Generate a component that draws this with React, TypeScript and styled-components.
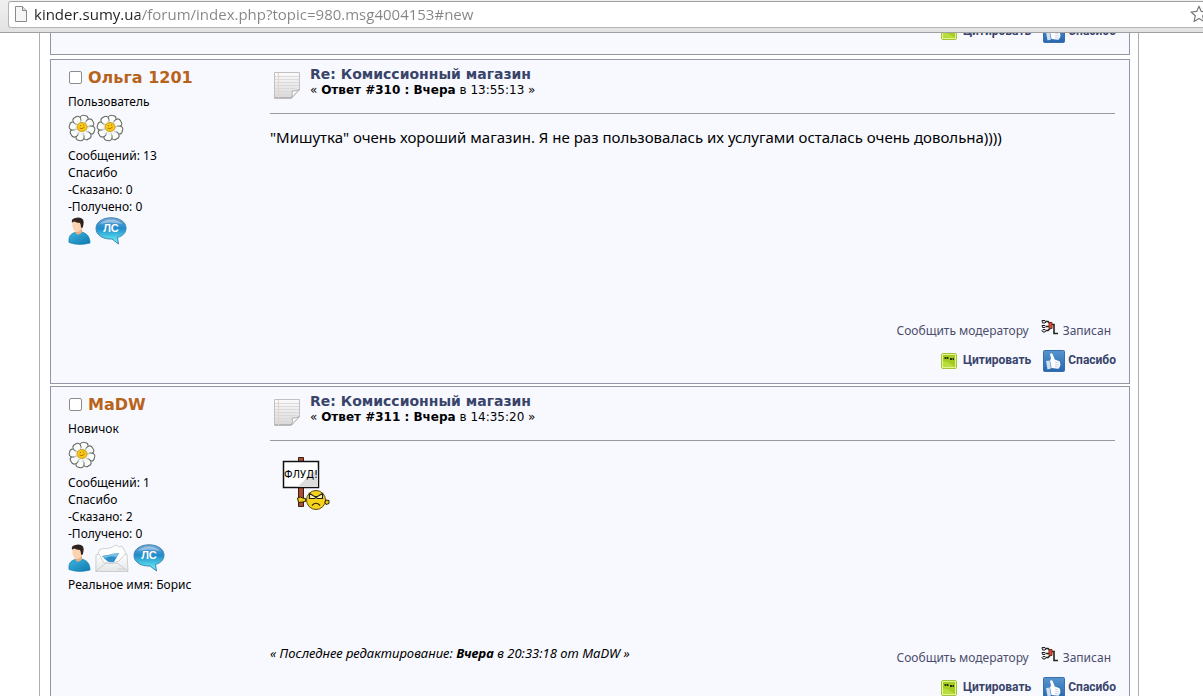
import React from "react";
import styled, { createGlobalStyle, css } from "styled-components";

const GlobalStyle = createGlobalStyle`
  *, *::before, *::after { box-sizing: border-box; }
  body {
    margin: 0;
    background: #fff;
    color: #000;
    font: 12px/17px "Noto Sans", Verdana, sans-serif;
  }
  h2, p { margin: 0; padding: 0; font-weight: normal; }
  svg { display: block; flex: none; }
  a { color: inherit; text-decoration: none; }
`;

const Browser = styled.div`
  display: flex;
  flex-direction: column;
  height: 100vh;
  overflow: hidden;
`;

const Toolbar = styled.header`
  display: flex;
  flex: none;
  height: 33px;
  padding: 1px 0 4px 8px;
  overflow: hidden;
  background: linear-gradient(#f0f0f0, #e2e2e2);
  border-bottom: 1px solid #a0a0a0;
`;

const AddressBox = styled.form`
  display: flex;
  flex: 1;
  align-items: center;
  gap: 7px;
  margin-right: -10px;
  padding: 0 4px 2px 6px;
  background: #fff;
  border: 1px solid #b4b4b4;
  border-top-color: #a2a2a2;
  border-radius: 3px;
`;

const AddressInput = styled.input`
  flex: 1;
  min-width: 0;
  padding: 0;
  border: 0;
  outline: 0;
  font: 15px/22px "Open Sans", "Segoe UI", sans-serif;
  color: transparent;
  background: linear-gradient(to right, #222 106px, #858585 106px);
  background-clip: text;
`;

const StarButton = styled.button`
  flex: none;
  padding: 0;
  border: 0;
  background: none;
`;

const Viewport = styled.main`
  flex: 1;
  min-height: 0;
  overflow: hidden;
`;

const Forum = styled.div`
  display: flex;
  flex-direction: column;
  gap: 2px;
  min-height: 100%;
  margin: 0 64px 0 39px;
  padding: 0 8px 0 10px;
  border: solid #b0b0b4;
  border-width: 0 1px;
`;

const panel = css`
  background: #f8f9ff;
  border: 1px solid #9495a5;
`;

const PreviousPost = styled.article`
  ${panel}
  display: flex;
  flex-direction: column;
  justify-content: flex-end;
  height: 22px;
  margin-bottom: 2px;
  padding: 0 13px 11px 17px;
  border-top: 0;
  overflow: hidden;
`;

const PostBox = styled.article`
  ${panel}
  display: grid;
  grid-template-columns: 202px 1fr;
  min-height: 325px;
  padding: 6px 13px 11px 17px;
`;

const Poster = styled.aside`
  display: flex;
  flex-direction: column;
`;

const NameRow = styled.label`
  display: flex;
  align-items: center;
  gap: 6px;
  height: 23px;
  margin-bottom: 4px;
  padding-left: 1px;
`;

const Tick = styled.input`
  width: 13px;
  height: 13px;
  margin: 0;
  appearance: none;
  background: #fff;
  border: 1px solid #8c8c8c;
  border-radius: 2px;
`;

const PosterName = styled.a`
  font: bold 16px/20px "DejaVu Sans", Verdana, sans-serif;
  color: #b8631c;
`;

const Stars = styled.div`
  display: flex;
  height: 28px;
  margin: 4px 0 5px;
`;

const Contacts = styled.div`
  display: flex;
  gap: 4px;
  height: 28px;
  margin: 2px 0 4px;
`;

const Content = styled.div`
  display: flex;
  flex-direction: column;
`;

const Heading = styled.header`
  display: flex;
  gap: 9px;
  height: 48px;
  margin-right: 1px;
  padding-left: 3px;
  border-bottom: 1px solid #9a9aa2;
`;

const Subject = styled.h2`
  font: bold 14px/16px "DejaVu Sans", Verdana, sans-serif;
  color: #38446a;
`;

const ReplyInfo = styled.p`
  font-family: "DejaVu Sans", Verdana, sans-serif;
`;

const NoteWrap = styled.div`
  padding-top: 4px;
`;

const Body = styled.div`
  flex: 1;
  padding-top: 13px;
  font-size: 15px;
  line-height: 20px;
`;

const Footer = styled.footer`
  display: flex;
  justify-content: space-between;
  height: 23px;
`;

const Edited = styled.p`
  font-size: 13px;
  font-style: italic;
  line-height: 15px;
`;

const Moderation = styled.div`
  display: flex;
  gap: 12px;
  margin-left: auto;
  padding-right: 5px;
  color: #4a4d6b;
`;

const IconText = styled.span`
  display: flex;
  gap: 4px;
`;

const ModText = styled.a`
  padding-top: 3px;
`;

const Actions = styled.nav`
  display: flex;
  flex: none;
  align-items: center;
  justify-content: flex-end;
  gap: 12px;
  height: 22px;
  margin-top: 8px;
`;

const Action = styled.a<{ $gap: number }>`
  display: flex;
  align-items: center;
  gap: ${(p) => p.$gap}px;
  font: bold 12px/17px Roboto, Arial, sans-serif;
  color: #38446a;
`;

const ActionLabel = styled.span`
  padding-bottom: 2px;
`;

const Smiley = styled.a`
  display: inline-block;
  padding: 1px 0 0 10px;
`;

const Page = () => (
  <svg width="12" height="16" viewBox="0 0 12 16" fill="#f6f6f6" stroke="#8a8a8a">
    <path d="M.5.5h7l4 4v11H.5z" />
    <path d="M7.5.5v4h4" fill="#ddd" />
  </svg>
);

const Star = () => (
  <svg width="18" height="18" viewBox="0 0 18 18" fill="#fff" stroke="#777" strokeWidth="1.2" strokeLinejoin="round">
    <path d="M9 1.2l2.3 5.2 5.6.6-4.2 3.8 1.2 5.6L9 13.6l-4.9 2.8 1.2-5.6L1.1 7l5.6-.6z" />
  </svg>
);

const petals = [0, 45, 90, 135, 180, 225, 270, 315];

const Flower = () => (
  <svg width="28" height="28" viewBox="0 0 28 28">
    <g fill="#fcfdfb" stroke="#5f6661" strokeWidth="1">
      {petals.map((a) => (
        <path key={a} transform={`rotate(${a + 12} 14 14)`} d="M14 14C11.500 10 9 5.500 10.300 3Q11.500.6 14.200 1.300 17.500 1 18 3.500C18.500 6 16.500 10 14 14z" />
      ))}
    </g>
    <circle cx="14" cy="14" r="7.500" fill="#f3f6f4" />
    <g stroke="#b5c2bd" strokeWidth="1">
      {petals.map((a) => (
        <path key={a} transform={`rotate(${a + 34} 14 14)`} d="M14 9V6" />
      ))}
    </g>
    <ellipse cx="14" cy="13" rx="5" ry="4.500" fill="#f9c815" stroke="#c0901a" strokeWidth=".8" />
    <path d="M11.500 14q2.500 2 5-1M12 11.500h1M15 11h1" fill="none" stroke="#a66c08" strokeWidth=".9" />
  </svg>
);

const Person = () => (
  <svg width="23" height="28" viewBox="0 0 23 28">
    <defs>
      <linearGradient id="shirt" x2="1" y2="1">
        <stop stopColor="#3db5e2" />
        <stop offset="1" stopColor="#0d79ad" />
      </linearGradient>
    </defs>
    <path d="M1 25.500C.5 20 2 17 7 15.500l7-.5c5 1.500 8 5 8 11Q11 29 1 25.500z" fill="url(#shirt)" stroke="#1380ae" strokeWidth=".7" />
    <path d="M7.500 13v3q2.500 3.500 6.500-.5v-4z" fill="#e9ad84" />
    <path d="M4.500 4q-.5 4 .3 7 1.500 4.500 4.700 4 3.500-1 5-5V4q-4-3-10 0z" fill="#fbd3b1" />
    <path d="M4 5.500Q3 2 6.500 1.300 12-1 15 2.500q1.500 3-.5 8.500l-1.500-.5q0-3-1-4.500-4-.3-5.500-1.500z" fill="#30231f" />
  </svg>
);

const Letter = () => (
  <svg width="34" height="28" viewBox="0 0 34 28" strokeLinejoin="round">
    <defs>
      <linearGradient id="paper" x2="0" y2="1">
        <stop stopColor="#fff" />
        <stop offset="1" stopColor="#e4e5e7" />
      </linearGradient>
    </defs>
    <path d="M2 12L5 5l10-1 6-3 3 2 3-1 5 9-6 12H7z" fill="#fdfdfd" stroke="#c6c8cb" strokeWidth=".8" />
    <path d="M1 11l3-1 5 9q8 2 15-2l6-7 2 1 1 16.500H.8z" fill="url(#paper)" stroke="#c3c5c8" strokeWidth=".8" />
    <path d="M7 12l17-3-5 9q-6 1-8-2z" fill="#2d8dc9" />
    <path d="M7 12l6-.5 5-2 6-.5-3 4q-6-2-10 1z" fill="#7fc0e5" />
    <path d="M1 27l10-8h11l11 8M23 25h7" fill="none" stroke="#c4c6ca" strokeWidth=".8" />
  </svg>
);

const Bubble = () => (
  <svg width="33" height="28" viewBox="0 0 33 28">
    <defs>
      <linearGradient id="bubble" x2="0" y2="1">
        <stop stopColor="#7ba6d2" />
        <stop offset=".4" stopColor="#1f8ccb" />
        <stop offset=".85" stopColor="#5ce3ee" />
      </linearGradient>
    </defs>
    <path d="M16 .8C24.500.8 31 5 31 11c0 5-3.500 8-8.500 9.500l1 6.500-6.500-5C8 22.500 1 18 1 11.500 1 5 7.500.8 16 .8z" fill="url(#bubble)" stroke="#3f87b0" />
    <path d="M5 7Q9 2.500 16 2.500T27 7Q16 4 5 7z" fill="#c9dff0" opacity=".55" />
    <text x="16" y="15" textAnchor="middle" fill="#fff" fontSize="11" fontWeight="bold" fontFamily="Liberation Sans, Arial, sans-serif">ЛС</text>
  </svg>
);

const Note = () => (
  <svg width="28" height="30" viewBox="0 0 28 30">
    <defs>
      <linearGradient id="note" x2="0" y2="1">
        <stop stopColor="#fbfbfb" />
        <stop offset="1" stopColor="#d9d9d9" />
      </linearGradient>
    </defs>
    <path d="M1.500 2.500h25v17l-8 8.500h-17z" fill="url(#note)" stroke="#c0c0c0" />
    <path d="M1.500 28h17" stroke="#999" />
    <path d="M2 6.500h24M2 9.500h24M2 12.500h24M2 15.500h24M2 18.500h22M2 21.500h16M2 24.500h16" stroke="#dadada" />
    <path d="M5.500 3v25" stroke="#f0cdc6" />
    <path d="M26.500 19.500l-8 8.500q1.500-4 .5-7 3.500.5 7.500-1.500z" fill="#fafafa" stroke="#9e9e9e" strokeWidth=".8" />
  </svg>
);

const Logged = () => (
  <svg width="18" height="17" viewBox="0 0 18 17" fill="none" stroke="#222">
    <path d="M1 1.500h3l1 1.500-1 1H1.500zM1 6.500h3l1 1-1 1H1.500zM1 11.500l1-1h2l1 1-1 1.500H2z" fill="#ddd" />
    <path d="M5 2.500h2l2 2M5 7.500h4M5 11.500h2l2-2M11 5.500h2v9h4" strokeWidth="1.600" />
    <path d="M8 3.500h3v6H8z" fill="#df4c2c" stroke="#7a2a1a" />
  </svg>
);

const Quote = () => (
  <svg width="16" height="18" viewBox="0 0 16 18">
    <rect x=".5" y="1.500" width="15" height="15" rx="1.500" fill="#a4cb22" stroke="#a5c23b" />
    <rect x="1.500" y="2.500" width="13" height="13" fill="none" stroke="#e3f58d" />
    <path d="M2 9q6 1 12 6v0H2z" fill="#b9dc3e" />
    <path d="M3.500 5h2v2h-2zM6 5h1.500v2H6zM9 6h2v2H9zM11.500 6H13v2h-1.500z" fill="#26330b" />
  </svg>
);

const Thumb = () => (
  <svg width="22" height="22" viewBox="0 0 22 22">
    <defs>
      <linearGradient id="thumb" x2="0" y2="1">
        <stop stopColor="#5795cf" />
        <stop offset="1" stopColor="#2767ae" />
      </linearGradient>
    </defs>
    <rect x=".5" y=".5" width="21" height="21" rx="1" fill="url(#thumb)" stroke="#386faf" />
    <path d="M3 11l3.500-.5 1.500 8-3.500 1z" fill="#cfe0f0" />
    <path d="M7 10.500l1-2L7 4q1.500-1.500 2.800.5l2 5 4 1.500q1.700.5 1.200 2 .8 1 .2 2 .3 1.300-.7 2 0 1.500-1.500 1.700L8.500 18z" fill="#fff" />
    <path d="M12 12l3.500 1M12 14.500l4 .5M12 16.500l3.500.5" stroke="#a9c6e2" strokeWidth=".7" />
  </svg>
);

const FloodSign = () => (
  <svg width="50" height="56" viewBox="0 0 50 56">
    <path d="M18.500 2.500h5v49h-5z" fill="#a94e35" stroke="#3c1d14" />
    <path d="M3.500 6.500h35v26h-35z" fill="#fff" stroke="#111" strokeWidth="1.500" />
    <path d="M38 13v19H17z" fill="#dcdcdc" />
    <text x="21" y="23" textAnchor="middle" fontSize="10" fontFamily="DejaVu Sans, Verdana, sans-serif" fill="#000">ФЛУД!</text>
    <circle cx="36" cy="45" r="9.500" fill="#f5d21c" stroke="#5d4a08" />
    <path d="M29.500 38.500l5 3h3l5-3v5h-5l-1.500-1-1.500 1h-5z" fill="#fff7b0" stroke="#222" strokeWidth="1.200" />
    <path d="M32 50.500q4-4.500 8 0" fill="none" stroke="#332806" strokeWidth="1.200" />
    <path d="M17.500 43l3-1 2 1 3 .5v3l-3 .5-4 .5zM46 45l3 .5v3l-3 1-1-2z" fill="#f0cd1b" stroke="#2d2405" />
  </svg>
);

const ActionRow = () => (
  <Actions>
    <Action href="#quote" $gap={6}><Quote /><ActionLabel>Цитировать</ActionLabel></Action>
    <Action href="#thanks" $gap={3}><Thumb /><ActionLabel>Спасибо</ActionLabel></Action>
  </Actions>
);

interface PostProps {
  id: string;
  name: string;
  rank: string;
  flowers: number;
  messages: number;
  said: number;
  received: number;
  realName?: string;
  mail?: boolean;
  reply: number;
  time: string;
  edited?: string;
  children: React.ReactNode;
}

const Post = (p: PostProps) => (
  <PostBox>
    <Poster>
      <NameRow htmlFor={p.id}>
        <Tick type="checkbox" id={p.id} />
        <PosterName href="#profile">{p.name}</PosterName>
      </NameRow>
      <p>{p.rank}</p>
      <Stars>{Array.from({ length: p.flowers }, (_, i) => <Flower key={i} />)}</Stars>
      <p>Сообщений: {p.messages}</p>
      <p>Спасибо</p>
      <p>-Сказано: {p.said}</p>
      <p>-Получено: {p.received}</p>
      <Contacts>
        <a href="#profile" aria-label="Профиль"><Person /></a>
        {p.mail && <a href="#mail" aria-label="E-mail"><Letter /></a>}
        <a href="#pm"><Bubble /></a>
      </Contacts>
      {p.realName && <p>Реальное имя: {p.realName}</p>}
    </Poster>
    <Content>
      <Heading>
        <NoteWrap><Note /></NoteWrap>
        <div>
          <Subject><a href="#subject">Re: Комиссионный магазин</a></Subject>
          <ReplyInfo>« <b>Ответ #{p.reply} : Вчера</b> в {p.time} »</ReplyInfo>
        </div>
      </Heading>
      <Body>{p.children}</Body>
      <Footer>
        {p.edited && <Edited>« Последнее редактирование: <b>Вчера</b> в {p.edited} от {p.name} »</Edited>}
        <Moderation>
          <ModText href="#report">Сообщить модератору</ModText>
          <IconText><Logged /><ModText href="#logged">Записан</ModText></IconText>
        </Moderation>
      </Footer>
      <ActionRow />
    </Content>
  </PostBox>
);

export default function App() {
  return (
    <Browser>
      <GlobalStyle />
      <Toolbar>
        <AddressBox>
          <Page />
          <AddressInput aria-label="Адрес" defaultValue="kinder.sumy.ua/forum/index.php?topic=980.msg4004153#new" />
          <StarButton type="button" aria-label="Закладка"><Star /></StarButton>
        </AddressBox>
      </Toolbar>
      <Viewport>
        <Forum>
          <PreviousPost><ActionRow /></PreviousPost>
          <Post id="post310" name="Ольга 1201" rank="Пользователь" flowers={2} messages={13} said={0} received={0} reply={310} time="13:55:13">
            "Мишутка" очень хороший магазин. Я не раз пользовалась их услугами осталась очень довольна))))
          </Post>
          <Post id="post311" name="MaDW" rank="Новичок" flowers={1} messages={1} said={2} received={0} realName="Борис" mail reply={311} time="14:35:20" edited="20:33:18">
            <Smiley href="#flood"><FloodSign /></Smiley>
          </Post>
        </Forum>
      </Viewport>
    </Browser>
  );
}
